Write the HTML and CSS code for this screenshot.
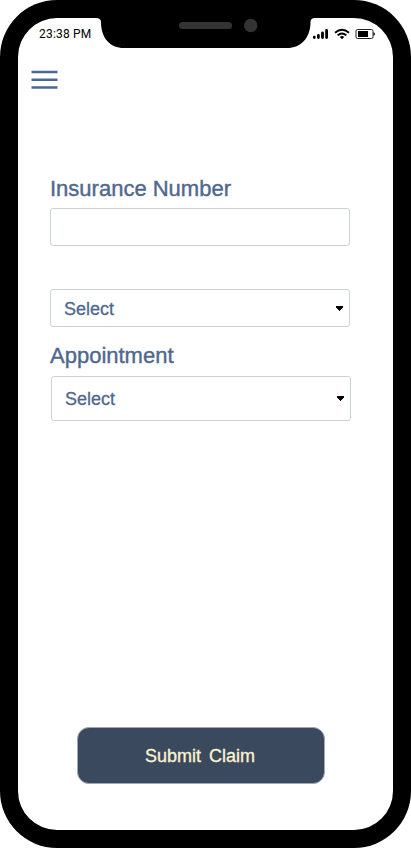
FILE: index.html
```html
<!DOCTYPE html>
<html lang="en">
<head>
<meta charset="utf-8">
<title>Submit Claim</title>
<link rel="stylesheet" href="styles.css">
</head>
<body>
<div class="phone">
  <main class="screen">
    <svg class="notch" width="219" height="30" viewBox="0 0 219 30" aria-hidden="true">
      <path d="M0 0H219C216 0 214.500 1.500 214.500 4C214.500 20 205 30 191 30H28C14 30 5 20 5 4C5 1.500 3 0 0 0Z" transform="translate(-2 0)" fill="#000"/>
      <rect x="81" y="4" width="53" height="7" rx="3.500" fill="#333"/>
      <circle cx="152.700" cy="7.500" r="6.700" fill="#333"/>
    </svg>
    <header class="status">
      <span class="time">23:38 PM</span>
      <svg class="indicators" width="64" height="12" viewBox="0 0 64 12" aria-hidden="true">
        <g stroke="#000" stroke-width="2.800" stroke-linecap="round">
          <path d="M2.300 9.100V9.500M6.400 7.500V9.500M10.500 5V9.500M14.600 2.300V9.500"/>
        </g>
        <g fill="none" stroke="#000" stroke-width="1.800">
          <path d="M23 4.700Q30 -1.300 37 4.700"/>
          <path d="M25.600 7.400Q30 3.500 34.400 7.400"/>
        </g>
        <path d="M27.700 9Q30 7.200 32.300 9L30 11.300Z" fill="#000"/>
        <rect x="44" y="1.500" width="17" height="9" rx="1.500" fill="#fff" stroke="#222" stroke-width="1"/>
        <rect x="46" y="3" width="10" height="6" fill="#000"/>
        <path d="M61.500 4Q64.500 6 61.500 8Z" fill="#000"/>
      </svg>
    </header>
    <button class="menu" aria-label="Menu"><svg width="27" height="20" viewBox="0 0 27 20"><path d="M.5 2H26.500M.5 9.700H26.500M.5 17.400H26.500"/></svg></button>
    <form class="claim">
      <label class="label" for="number">Insurance Number</label>
      <input class="field" id="number" type="text">
      <div class="field select"><span>Select</span><svg width="9" height="5" viewBox="0 0 9 5" shape-rendering="crispEdges"><path d="M1 0H8V2H7V3H6V4H5V5H4V4H3V3H2V2H1Z"/></svg></div>
      <div class="label second">Appointment</div>
      <div class="field select tall"><span>Select</span><svg width="9" height="5" viewBox="0 0 9 5" shape-rendering="crispEdges"><path d="M1 0H8V2H7V3H6V4H5V5H4V4H3V3H2V2H1Z"/></svg></div>
    </form>
    <button class="submit">Submit Claim</button>
  </main>
</div>
</body>
</html>
```
FILE: styles.css
```css
* { box-sizing: border-box; }
body {
  margin: 0;
  background: #fff;
  font-family: "Liberation Sans", Arial, sans-serif;
}
.phone {
  width: 411px;
  height: 848px;
  padding: 18px;
  background: #000;
  border-radius: 57px;
}
.screen {
  position: relative;
  display: flex;
  flex-direction: column;
  height: 812px;
  background: #fff;
  border-radius: 39px;
}
.notch {
  position: absolute;
  top: 0;
  left: 80px;
  overflow: visible;
}
.status {
  display: flex;
  justify-content: space-between;
  height: 32px;
  padding: 9px 17px 0 21px;
}
.time {
  font: 12px/14px Roboto, sans-serif;
  letter-spacing: 0.2px;
  color: #000;
}
.indicators { margin-top: 1px; }
.menu {
  width: 27px;
  height: 20px;
  margin: 20px 0 0 13px;
  padding: 0;
  border: 0;
  background: none;
}
.menu svg {
  display: block;
  stroke: #4f688e;
  stroke-width: 2.500;
}
.claim {
  display: flex;
  flex-direction: column;
  width: 301px;
  margin: 85px 0 0 32px;
}
.label {
  height: 33px;
  font-size: 22px;
  line-height: 27px;
  color: #4f688e;
  -webkit-text-stroke: 0.4px #4f688e;
  white-space: nowrap;
}
.field {
  width: 300px;
  height: 38px;
  border: 1px solid #ccd2dc;
  border-radius: 3px;
  background: #fff;
}
.select {
  display: flex;
  align-items: center;
  justify-content: space-between;
  margin-top: 43px;
  padding: 0 5px 0 13px;
  font-size: 18px;
  color: #4f688e;
  -webkit-text-stroke: 0.3px #4f688e;
}
.select span { padding-top: 2px; }
.select svg {
  fill: #000;
  stroke: none;
}
.second {
  height: 34px;
  margin-top: 15px;
}
.tall {
  height: 45px;
  margin: 0 0 0 1px;
}
.submit {
  width: 248px;
  height: 57px;
  margin: auto 0 46px 59px;
  padding: 2px 2px 0 0;
  border: 1px solid #a0a8b8;
  border-radius: 12px;
  background: #3b495f;
  color: #fbf5d0;
  font: 18px "Liberation Sans", Arial, sans-serif;
  word-spacing: 3px;
  -webkit-text-stroke: 0.3px #fbf5d0;
}
```
